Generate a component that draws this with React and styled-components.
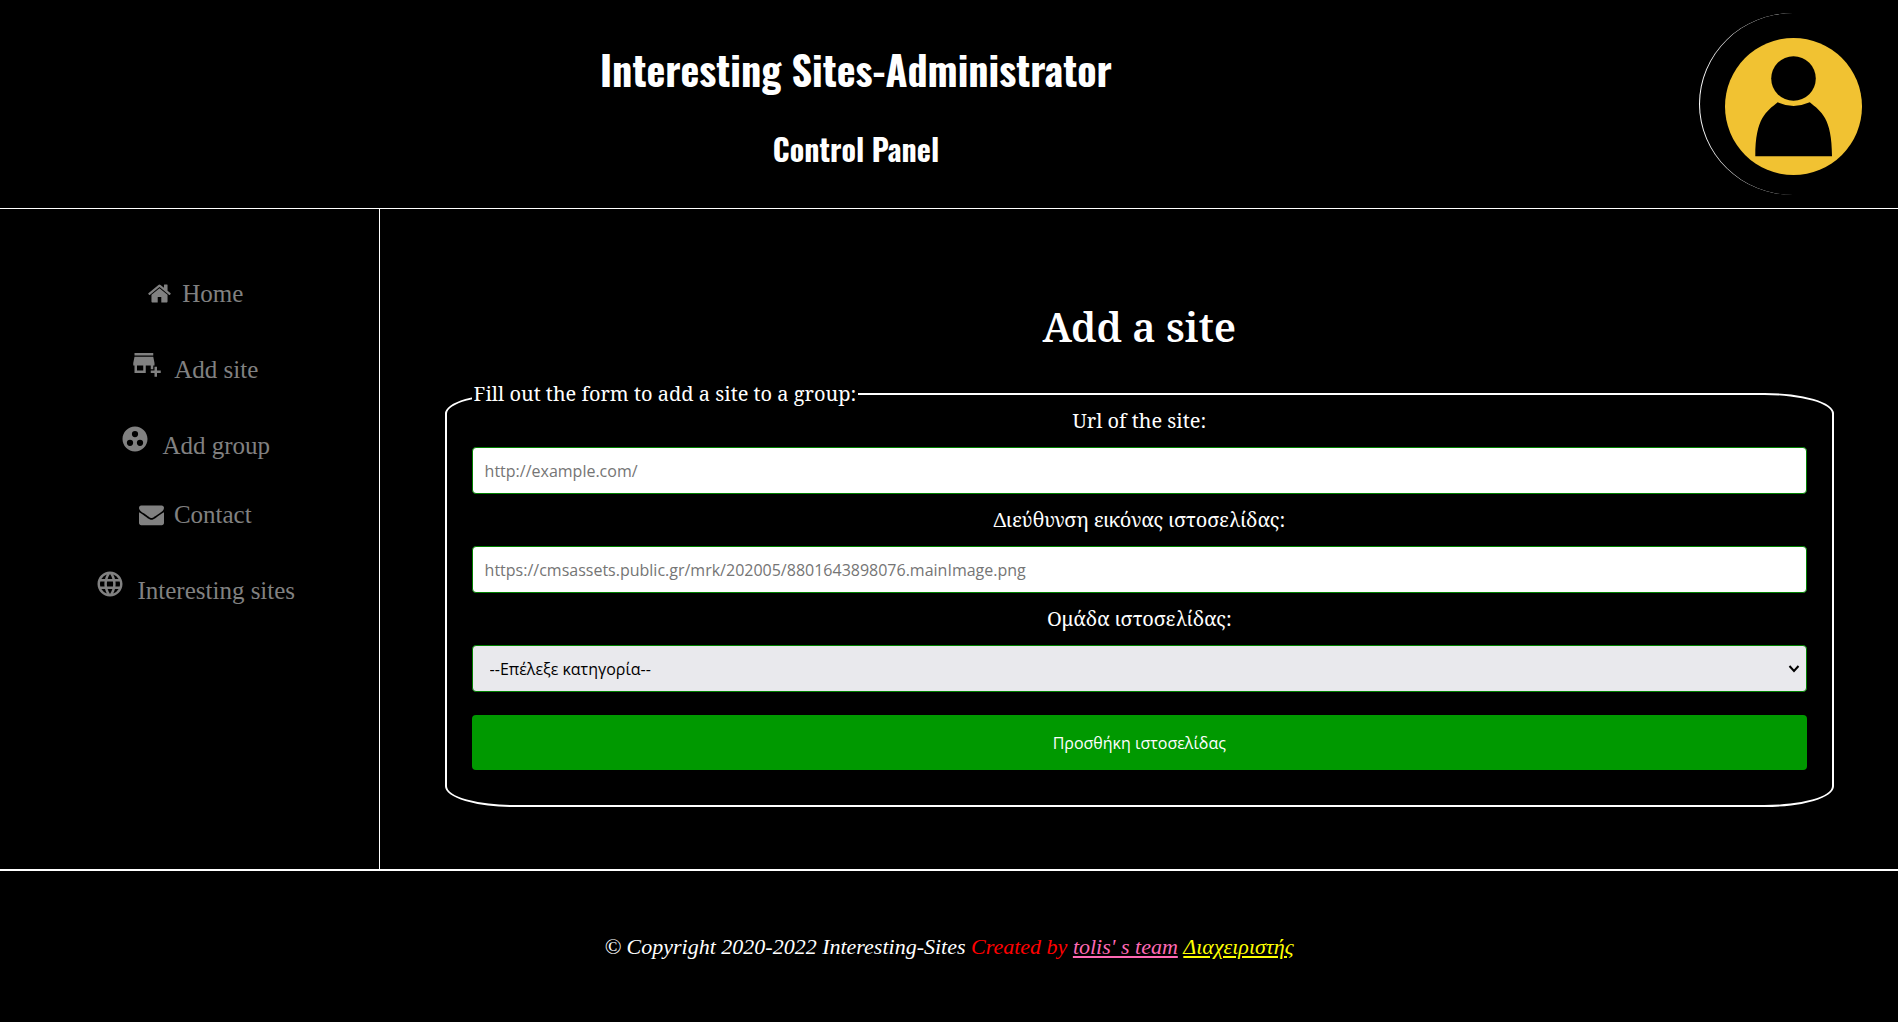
import React from 'react';
import styled, { createGlobalStyle } from 'styled-components';
import { MdAddBusiness, MdGroupWork, MdLanguage } from 'react-icons/md';

const GlobalStyle = createGlobalStyle`
  *, *::before, *::after { box-sizing: border-box; }
  body {
    margin: 0;
    background: #000;
    color: #fff;
    font-family: "Liberation Serif", serif;
  }
`;

const Page = styled.div`
  display: flex;
  flex-direction: column;
  min-height: 100vh;
`;

const Header = styled.header`
  display: flex;
  align-items: center;
  border-bottom: 1px solid #fff;
`;

const Titles = styled.div`
  flex: 1;
  display: flex;
  flex-direction: column;
  gap: 28px;
  padding: 2px 0 0 13px;
  text-align: center;
  font-family: Oswald, "Roboto Condensed", sans-serif;
  font-weight: 700;
`;

const SiteTitle = styled.h1`
  margin: 0;
  font-size: 40px;
  line-height: 60px;
`;

const SiteSubtitle = styled.h2`
  margin: 0;
  font-size: 30px;
  line-height: 44px;
`;

const Avatar = styled.div`
  margin: 13px 11px 13px 0;
  padding: 25px 25px 20px;
  border-left: 1px solid #fff;
  border-radius: 50%;

  svg { display: block; }
`;

const Body = styled.div`
  flex: 1;
  display: grid;
  grid-template-columns: 20% 1fr;
`;

const Sidebar = styled.nav`
  border-right: 1px solid #fff;
  padding: 70px 0 40px 12px;
`;

const NavList = styled.ul`
  display: flex;
  flex-direction: column;
  align-items: center;
  gap: 40px;
  margin: 0;
  padding: 0;
  list-style: none;
`;

const NavLink = styled.a`
  display: block;
  color: #818181;
  font-size: 25px;
  line-height: 29px;
  text-decoration: none;

  svg {
    margin-right: ${(p) => (p.$wide ? 12 : 10)}px;
    vertical-align: ${(p) => (p.$wide ? 'baseline' : '-4px')};
  }

  &:hover { color: #f1f1f1; }
`;

const GlyphIcon = styled.svg`
  width: 25px;
  height: 25px;
  fill: currentColor;
`;

const Main = styled.main`
  padding: 91px 64px 62px 65px;
  font-family: "Noto Serif", "DejaVu Serif", serif;
  font-size: 20px;
`;

const Heading = styled.h1`
  margin: 0 0 26px;
  font-size: 40px;
  font-weight: 600;
  line-height: 54px;
  text-align: center;
`;

const Fieldset = styled.fieldset`
  display: block;
  min-width: 0;
  margin: 0;
  padding: 0 25px 35px;
  border: 2px solid #fff;
  border-radius: 5%;
`;

const Legend = styled.legend`
  padding: 0 2px;
  line-height: 28px;
`;

const Field = styled.div`
  display: flex;
  flex-direction: column;
  gap: 13px;
  margin-bottom: ${(p) => (p.$last ? 23 : 13)}px;
`;

const Label = styled.label`
  line-height: 26px;
  text-align: center;
`;

const controlText = `
  font-family: "Open Sans", "Noto Sans", sans-serif;
  font-size: 16px;
`;

const TextInput = styled.input`
  ${controlText}
  width: 100%;
  height: 47px;
  padding: 0 12px;
  border: 1px solid #008000;
  border-radius: 4px;
  background: #fff;
  color: #000;

  &::placeholder { color: #757575; opacity: 1; }
`;

const SelectBox = styled.div`
  position: relative;

  svg {
    position: absolute;
    right: 7px;
    top: 19px;
    pointer-events: none;
  }
`;

const Select = styled.select`
  ${controlText}
  display: block;
  appearance: none;
  width: 100%;
  height: 47px;
  padding: 0 17px;
  border: 1px solid #008000;
  border-radius: 4px;
  background: #e9e9ed;
  color: #000;
`;

const SubmitButton = styled.button`
  ${controlText}
  display: block;
  width: 100%;
  height: 55px;
  border: 0;
  border-radius: 4px;
  background: #009900;
  color: #fff;
  cursor: pointer;
`;

const Footer = styled.footer`
  padding: 63px 0;
  border-top: 2px solid #fff;
  font-size: 22px;
  font-style: italic;
  line-height: 25px;
  text-align: center;
`;

const Credit = styled.span`
  color: #f00;
`;

const FooterLink = styled.a`
  color: ${(p) => p.$color};
`;

const HomeIcon = () => (
  <GlyphIcon viewBox="0 0 1792 1792" aria-hidden="true">
    <path d="M1472 992v480q0 26-19 45t-45 19h-384v-384h-256v384h-384q-26 0-45-19t-19-45v-480q0-1 .5-3t.5-3l575-474 575 474q1 2 1 6zm223-69l-62 74q-8 9-21 11h-3q-13 0-21-7l-692-577-692 577q-12 8-24 7-13-2-21-11l-62-74q-8-10-7-23.5t11-21.5l719-599q32-26 76-26t76 26l244 204v-195q0-14 9-23t23-9h192q14 0 23 9t9 23v408l219 182q10 8 11 21.5t-7 23.5z" />
  </GlyphIcon>
);

const EnvelopeIcon = () => (
  <GlyphIcon viewBox="0 0 1792 1792" aria-hidden="true">
    <path d="M1792 710v794q0 66-47 113t-113 47h-1472q-66 0-113-47t-47-113v-794q44 49 101 87 362 246 497 345 57 42 92.500 65.500t94.500 48 110 24.500h2q51 0 110-24.500t94.500-48 92.500-65.500q170-123 498-345 57-39 100-87zm0-294q0 79-49 151t-122 123q-376 261-468 325-10 7-42.500 31t-54 38.500-52 32.500-57.500 27-50 9h-2q-23 0-50-9t-57.500-27-52-32.500-54-38.500-42.500-31q-91-64-262-182.500t-205-142.500q-62-42-117-115.500t-55-136.500q0-78 41.500-130t118.500-52h1472q65 0 112.500 47t47.500 113z" />
  </GlyphIcon>
);

const NAV = [
  { label: 'Home', icon: <HomeIcon /> },
  { label: 'Add site', icon: <MdAddBusiness size={30} />, wide: true },
  { label: 'Add group', icon: <MdGroupWork size={30} />, wide: true },
  { label: 'Contact', icon: <EnvelopeIcon /> },
  { label: 'Interesting sites', icon: <MdLanguage size={30} />, wide: true },
];

export default function App() {
  return (
    <Page>
      <GlobalStyle />
      <Header>
        <Titles>
          <SiteTitle>Interesting Sites-Administrator</SiteTitle>
          <SiteSubtitle>Control Panel</SiteSubtitle>
        </Titles>
        <Avatar>
          <svg width="137" height="137" viewBox="0 0 137 137" role="img" aria-label="User">
            <circle cx="68.500" cy="68.500" r="68.500" fill="#f1c232" />
            <circle cx="68.500" cy="40.500" r="22.300" />
            <path d="M52.700 64.300Q68.500 71.500 84.800 64.300C96 73.500 107 80 107 118.300H30.300C30.300 80 41.500 73.500 52.700 64.300Z" />
          </svg>
        </Avatar>
      </Header>
      <Body>
        <Sidebar>
          <NavList>
            {NAV.map((item) => (
              <li key={item.label}>
                <NavLink href="#" $wide={item.wide}>
                  {item.icon}
                  {item.label}
                </NavLink>
              </li>
            ))}
          </NavList>
        </Sidebar>
        <Main>
          <Heading>Add a site</Heading>
          <form>
            <Fieldset>
              <Legend>Fill out the form to add a site to a group:</Legend>
              <Field>
                <Label htmlFor="url">Url of the site:</Label>
                <TextInput id="url" type="text" placeholder="http://example.com/" />
              </Field>
              <Field>
                <Label htmlFor="image">Διεύθυνση εικόνας ιστοσελίδας:</Label>
                <TextInput
                  id="image"
                  type="text"
                  placeholder="https://cmsassets.public.gr/mrk/202005/8801643898076.mainImage.png"
                />
              </Field>
              <Field $last>
                <Label htmlFor="group">Ομάδα ιστοσελίδας:</Label>
                <SelectBox>
                  <Select id="group">
                    <option>--Επέλεξε κατηγορία--</option>
                  </Select>
                  <svg width="12" height="10" viewBox="0 0 12 10" fill="none" stroke="#000" strokeWidth="2" aria-hidden="true">
                    <path d="M1.500 2L6 7L10.500 2" />
                  </svg>
                </SelectBox>
              </Field>
              <SubmitButton type="button">Προσθήκη ιστοσελίδας</SubmitButton>
            </Fieldset>
          </form>
        </Main>
      </Body>
      <Footer>
        © Copyright 2020-2022 Interesting-Sites <Credit>Created by</Credit>{' '}
        <FooterLink href="#" $color="#ff69b4">tolis' s team</FooterLink>{' '}
        <FooterLink href="#" $color="#ff0">Διαχειριστής</FooterLink>
      </Footer>
    </Page>
  );
}
